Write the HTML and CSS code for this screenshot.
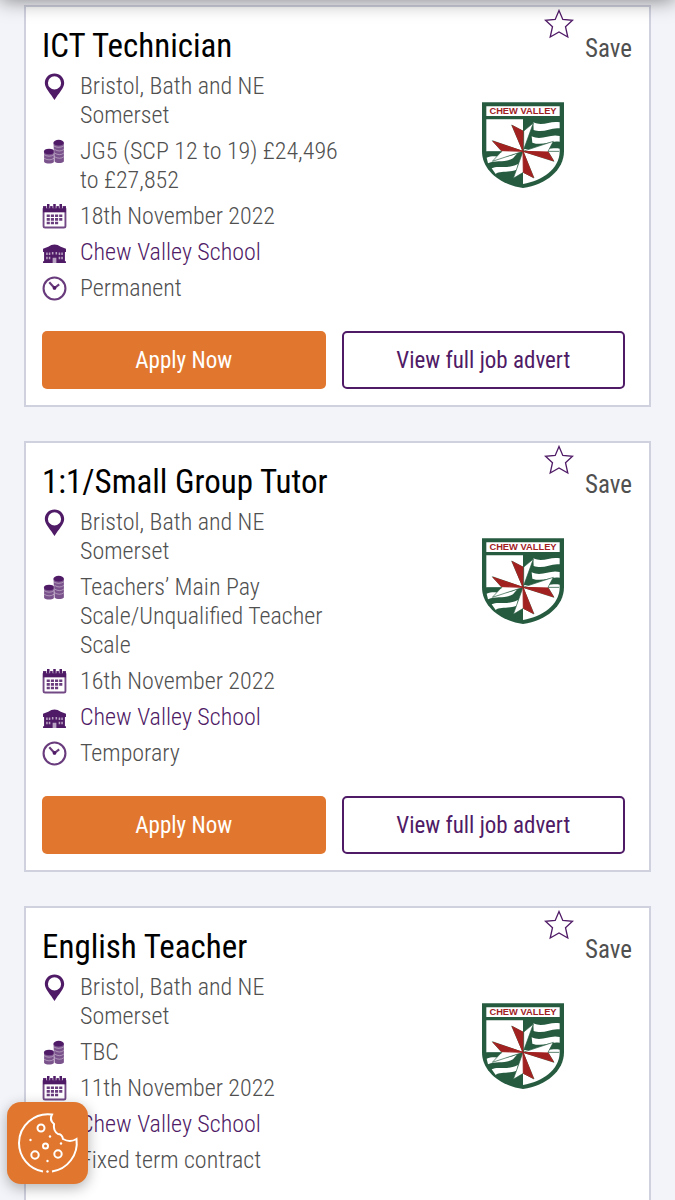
FILE: index.html
```html
<!DOCTYPE html>
<html lang="en">
<head>
    <meta charset="UTF-8">
    <meta name="viewport" content="width=device-width, initial-scale=1.0">
    <title>Job search</title>
    <link rel="stylesheet" href="styles.css">
</head>
<body>
    <svg class="sprite" aria-hidden="true">
        <symbol id="pin" viewBox="1 0 22 30">
            <path fill-rule="evenodd" d="M12 1.500C6.300 1.500 2 5.800 2 11.300C2 17 8 22 12 29C16 22 22 17 22 11.300C22 5.800 17.700 1.500 12 1.500ZM12 4.500A6.800 6.800 0 1 1 12 18.100A6.800 6.800 0 1 1 12 4.500Z"/>
        </symbol>
        <symbol id="coins" viewBox="0 0 24 24">
            <path opacity=".75" d="M11 3.500h10v18c-2 2-7 2-9 0zM2 12.500h9.500v9.500c-2 2-7.500 2-9.500 0z"/>
            <ellipse cx="16" cy="3.500" rx="5" ry="2.700"/>
            <ellipse cx="6.800" cy="12" rx="4.900" ry="2.600"/>
            <path fill="none" stroke="#fff" stroke-width=".6" opacity=".6" d="M11 6.500q5 3 10 0M12 10q5 3 9 0M12 13.500q5 3 9 0M12 17q5 3 9 0M2 15q5 3 9.500 0M2 18.500q5 3 9.500 0M11.600 10v12"/>
        </symbol>
        <symbol id="calendar" viewBox="0 0 24 24">
            <path fill="none" stroke="currentColor" stroke-width="1.800" opacity=".8" d="M1.500 4v17q0 1.500 1.500 1.500h18q1.500 0 1.500-1.500V4"/>
            <path d="M1 2h22v6H1z"/>
            <path stroke="#fff" stroke-width="3.600" d="M6 0v4M12 0v4M18 0v4"/>
            <path stroke="currentColor" stroke-width="2.400" d="M6 0v4.500M12 0v4.500M18 0v4.500"/>
            <path opacity=".85" d="M8.500 10h3v2.500h-3zM12.500 10h3v2.500h-3zM16.500 10h3v2.500h-3zM4.500 10h3v2.500h-3zM4.500 13.500h3V16h-3zM8.500 13.500h3V16h-3zM12.500 13.500h3V16h-3zM16.500 13.500h3V16h-3zM4.500 17h3v2.500h-3zM8.500 17h3v2.500h-3zM12.500 17h3v2.500h-3z"/>
        </symbol>
        <symbol id="school" viewBox="0 0 24 24">
            <path d="M6 6.500q6-4.500 12 0l5 2v3h-1v9h1v1.500H1v-1.500h1v-9H1v-3z"/>
            <path fill="#fff" opacity=".6" d="M4 12h1.500v2.500H4zM6.500 12H8v2.500H6.500zM9.500 11.500H11v2.500H9.500zM13 11.500h1.500v2.500H13zM16 12h1.500v2.500H16zM18.500 12H20v2.500h-1.500zM4 16h1.500v2.500H4zM6.500 16H8v2.500H6.500zM16 16h1.500v2.500H16zM18.500 16H20v2.500h-1.500zM10.200 17h3.600v5h-3.600z"/>
        </symbol>
        <symbol id="clock" viewBox="0 0 24 24">
            <g fill="none" stroke="currentColor" stroke-width="2" opacity=".85">
                <circle cx="12" cy="12" r="10.500"/>
                <path d="M7 6l5 5.500 4.500-3.500"/>
            </g>
            <circle cx="12" cy="11.500" r="1.800"/>
        </symbol>
        <symbol id="star" viewBox="0 0 30 30">
            <path fill="#fff" stroke="currentColor" stroke-width="1.300" d="M15 1.500L18.800 10.500L28.500 11.300L21.500 17.700L23.800 28L15 23L6.200 28L8.500 17.700L1.500 11.300L11.200 10.500Z"/>
        </symbol>
        <symbol id="crest" viewBox="39 36 246 258">
            <path fill="#265b40" d="M39 37H285V184C285 240 232 284 162 294C92 284 39 240 39 184Z"/>
            <path fill="#fff" d="M52 49H272V78H52ZM52 88H162V184H52Z"/>
            <path fill="#fff" d="M162 184H272C272 237 220 272 162 282Z"/>
            <path fill="#fff" d="M193 97C222 110 244 91 272 97V115C244 111 225 131 194 120ZM188 139C220 153 242 130 272 138V155C244 150 222 169 190 158ZM162 184H272V176C248 170 220 186 162 176Z"/>
            <path fill="#fff" d="M53 203C80 192 104 210 145 190L132 205C106 220 82 208 57 220ZM68 235C89 224 108 240 147 222L143 239C116 249 93 241 80 252Z"/>
            <path fill="#fff" stroke="#265b40" stroke-width="2" d="M162 184L128 105L163 124L193 99ZM162 184L253 154L237 184L255 214ZM162 184L195 264L163 247L133 265ZM162 184L70 214L98 184L70 152Z"/>
            <path fill="#a0211f" stroke="#a0211f" stroke-width="3" stroke-linejoin="round" d="M162 184L130 107L163 124ZM162 184L237 186L253 212ZM162 184L193 262L163 247ZM162 184L98 182L72 154Z"/>
            <path stroke="#265b40" stroke-width="2" d="M55 186H98M237 184H270M164 88V184"/>
            <text class="crest-text" x="162" y="73" text-anchor="middle">CHEW VALLEY</text>
        </symbol>
    </svg>

    <header class="top-bar"></header>

    <main class="jobs">
        <article class="job">
            <div class="job-top">
                <div class="job-info">
                    <h2>ICT Technician</h2>
                    <ul>
                        <li><svg><use href="#pin"/></svg><span>Bristol, Bath and NE Somerset</span></li>
                        <li><svg><use href="#coins"/></svg><span>JG5 (SCP 12 to 19) £24,496 to £27,852</span></li>
                        <li><svg><use href="#calendar"/></svg><span>18th November 2022</span></li>
                        <li><svg><use href="#school"/></svg><a href="#">Chew Valley School</a></li>
                        <li><svg><use href="#clock"/></svg><span>Permanent</span></li>
                    </ul>
                </div>
                <div class="job-side">
                    <a class="save" href="#"><svg><use href="#star"/></svg><span>Save</span></a>
                    <svg class="crest" role="img" aria-label="Chew Valley School"><use href="#crest"/></svg>
                </div>
            </div>
            <div class="job-buttons">
                <button class="apply">Apply Now</button>
                <button class="view">View full job advert</button>
            </div>
        </article>

        <article class="job">
            <div class="job-top">
                <div class="job-info">
                    <h2>1:1/Small Group Tutor</h2>
                    <ul>
                        <li><svg><use href="#pin"/></svg><span>Bristol, Bath and NE Somerset</span></li>
                        <li><svg><use href="#coins"/></svg><span>Teachers’ Main Pay Scale/Unqualified Teacher Scale</span></li>
                        <li><svg><use href="#calendar"/></svg><span>16th November 2022</span></li>
                        <li><svg><use href="#school"/></svg><a href="#">Chew Valley School</a></li>
                        <li><svg><use href="#clock"/></svg><span>Temporary</span></li>
                    </ul>
                </div>
                <div class="job-side">
                    <a class="save" href="#"><svg><use href="#star"/></svg><span>Save</span></a>
                    <svg class="crest" role="img" aria-label="Chew Valley School"><use href="#crest"/></svg>
                </div>
            </div>
            <div class="job-buttons">
                <button class="apply">Apply Now</button>
                <button class="view">View full job advert</button>
            </div>
        </article>

        <article class="job">
            <div class="job-top">
                <div class="job-info">
                    <h2>English Teacher</h2>
                    <ul>
                        <li><svg><use href="#pin"/></svg><span>Bristol, Bath and NE Somerset</span></li>
                        <li><svg><use href="#coins"/></svg><span>TBC</span></li>
                        <li><svg><use href="#calendar"/></svg><span>11th November 2022</span></li>
                        <li><svg><use href="#school"/></svg><a href="#">Chew Valley School</a></li>
                        <li><svg><use href="#clock"/></svg><span>Fixed term contract</span></li>
                    </ul>
                </div>
                <div class="job-side">
                    <a class="save" href="#"><svg><use href="#star"/></svg><span>Save</span></a>
                    <svg class="crest" role="img" aria-label="Chew Valley School"><use href="#crest"/></svg>
                </div>
            </div>
            <div class="job-buttons">
                <button class="apply">Apply Now</button>
                <button class="view">View full job advert</button>
            </div>
        </article>
    </main>

    <button class="cookies" aria-label="Cookie settings">
        <svg viewBox="0 0 60 60" fill="none" stroke="#fff" stroke-width="2">
            <path d="M25 58.500A29 29 0 0 1 1 30A29 29 0 0 1 34 1.500Q31 7 36 11Q35 18 40 21Q44 21 45 26Q52 30 58.500 26A29 29 0 0 1 34 58.500"/>
            <circle cx="23" cy="15" r="3.500"/>
            <circle cx="27.500" cy="33" r="2.500"/>
            <circle cx="17" cy="42" r="3.700"/>
            <circle cx="40" cy="41" r="3.700"/>
            <g fill="#fff" stroke="none">
                <circle cx="12.500" cy="27" r="1.200"/>
                <circle cx="32" cy="23.500" r="1.200"/>
                <circle cx="43" cy="30.500" r="1.200"/>
                <circle cx="29.500" cy="48" r="1.200"/>
                <circle cx="29.500" cy="58.500" r="1.200"/>
            </g>
        </svg>
    </button>
</body>
</html>
```
FILE: styles.css
```css
* {
    margin: 0;
    padding: 0;
    box-sizing: border-box;
}

body {
    background-color: #f3f4f9;
    font-family: "Roboto Condensed", Roboto, sans-serif;
    font-size: 24px;
    line-height: 29px;
    color: #505050;
}

.sprite {
    position: absolute;
    width: 0;
    height: 0;
}

/* only the shadow of the bar reaches into the page */
.top-bar {
    position: fixed;
    top: -20px;
    left: 0;
    right: 0;
    height: 20px;
    box-shadow: 0 0 20px rgba(0, 0, 0, 0.5);
    z-index: 5;
}

.jobs {
    display: flex;
    flex-direction: column;
    gap: 34px;
    padding: 5px 24px 34px;
}

.job {
    background-color: #fff;
    border: 2px solid #cfd1df;
    padding: 0 24px 16px 16px;
}

.job-top {
    display: flex;
    justify-content: space-between;
}

.job-info {
    width: 52%;
    padding-top: 20px;
}

.job h2 {
    font-size: 33px;
    font-weight: 400;
    line-height: 38px;
    margin-bottom: 7px;
    color: #000;
    white-space: nowrap;
}

.job ul {
    display: flex;
    flex-direction: column;
    gap: 7px;
    list-style: none;
    font-weight: 300;
}

.job li {
    display: flex;
    gap: 13px;
}

.job li svg {
    flex: none;
    width: 25px;
    height: 29px;
    color: #4f1a66;
    fill: #4f1a66;
}

.job li a {
    color: #4f1a66;
    text-decoration: none;
}

.job-side {
    display: flex;
    flex-direction: column;
    align-items: center;
    width: 35%;
}

.save {
    display: flex;
    align-self: flex-end;
    gap: 11px;
    margin-right: -7px;
    color: #505050;
    font-size: 25px;
    text-decoration: none;
}

.save svg {
    width: 30px;
    height: 30px;
    margin-top: 2px;
    color: #4f1a66;
}

.save span {
    padding-top: 27px;
}

.crest {
    width: 82px;
    height: 86px;
    margin-top: 39px;
}

.crest-text {
    font: bold 28px "Liberation Sans", sans-serif;
    fill: #a0211f;
}

.job-buttons {
    display: grid;
    grid-template-columns: 1fr 1fr;
    gap: 16px;
    margin-top: 28px;
}

.job-buttons button {
    height: 58px;
    border-radius: 5px;
    font: inherit;
    font-size: 23px;
    cursor: pointer;
}

.apply {
    background-color: #e1772e;
    border: none;
    color: #fff;
}

.view {
    background-color: #fff;
    border: 2px solid #4f1a66;
    color: #4f1a66;
}

.cookies {
    position: fixed;
    left: 7px;
    bottom: 16px;
    display: flex;
    align-items: center;
    justify-content: center;
    width: 81px;
    height: 82px;
    background-color: #e1772e;
    border: none;
    border-radius: 14px;
    box-shadow: 0 4px 14px rgba(0, 0, 0, 0.3);
    cursor: pointer;
    z-index: 5;
}

.cookies svg {
    width: 60px;
    height: 60px;
    overflow: visible;
}
```
